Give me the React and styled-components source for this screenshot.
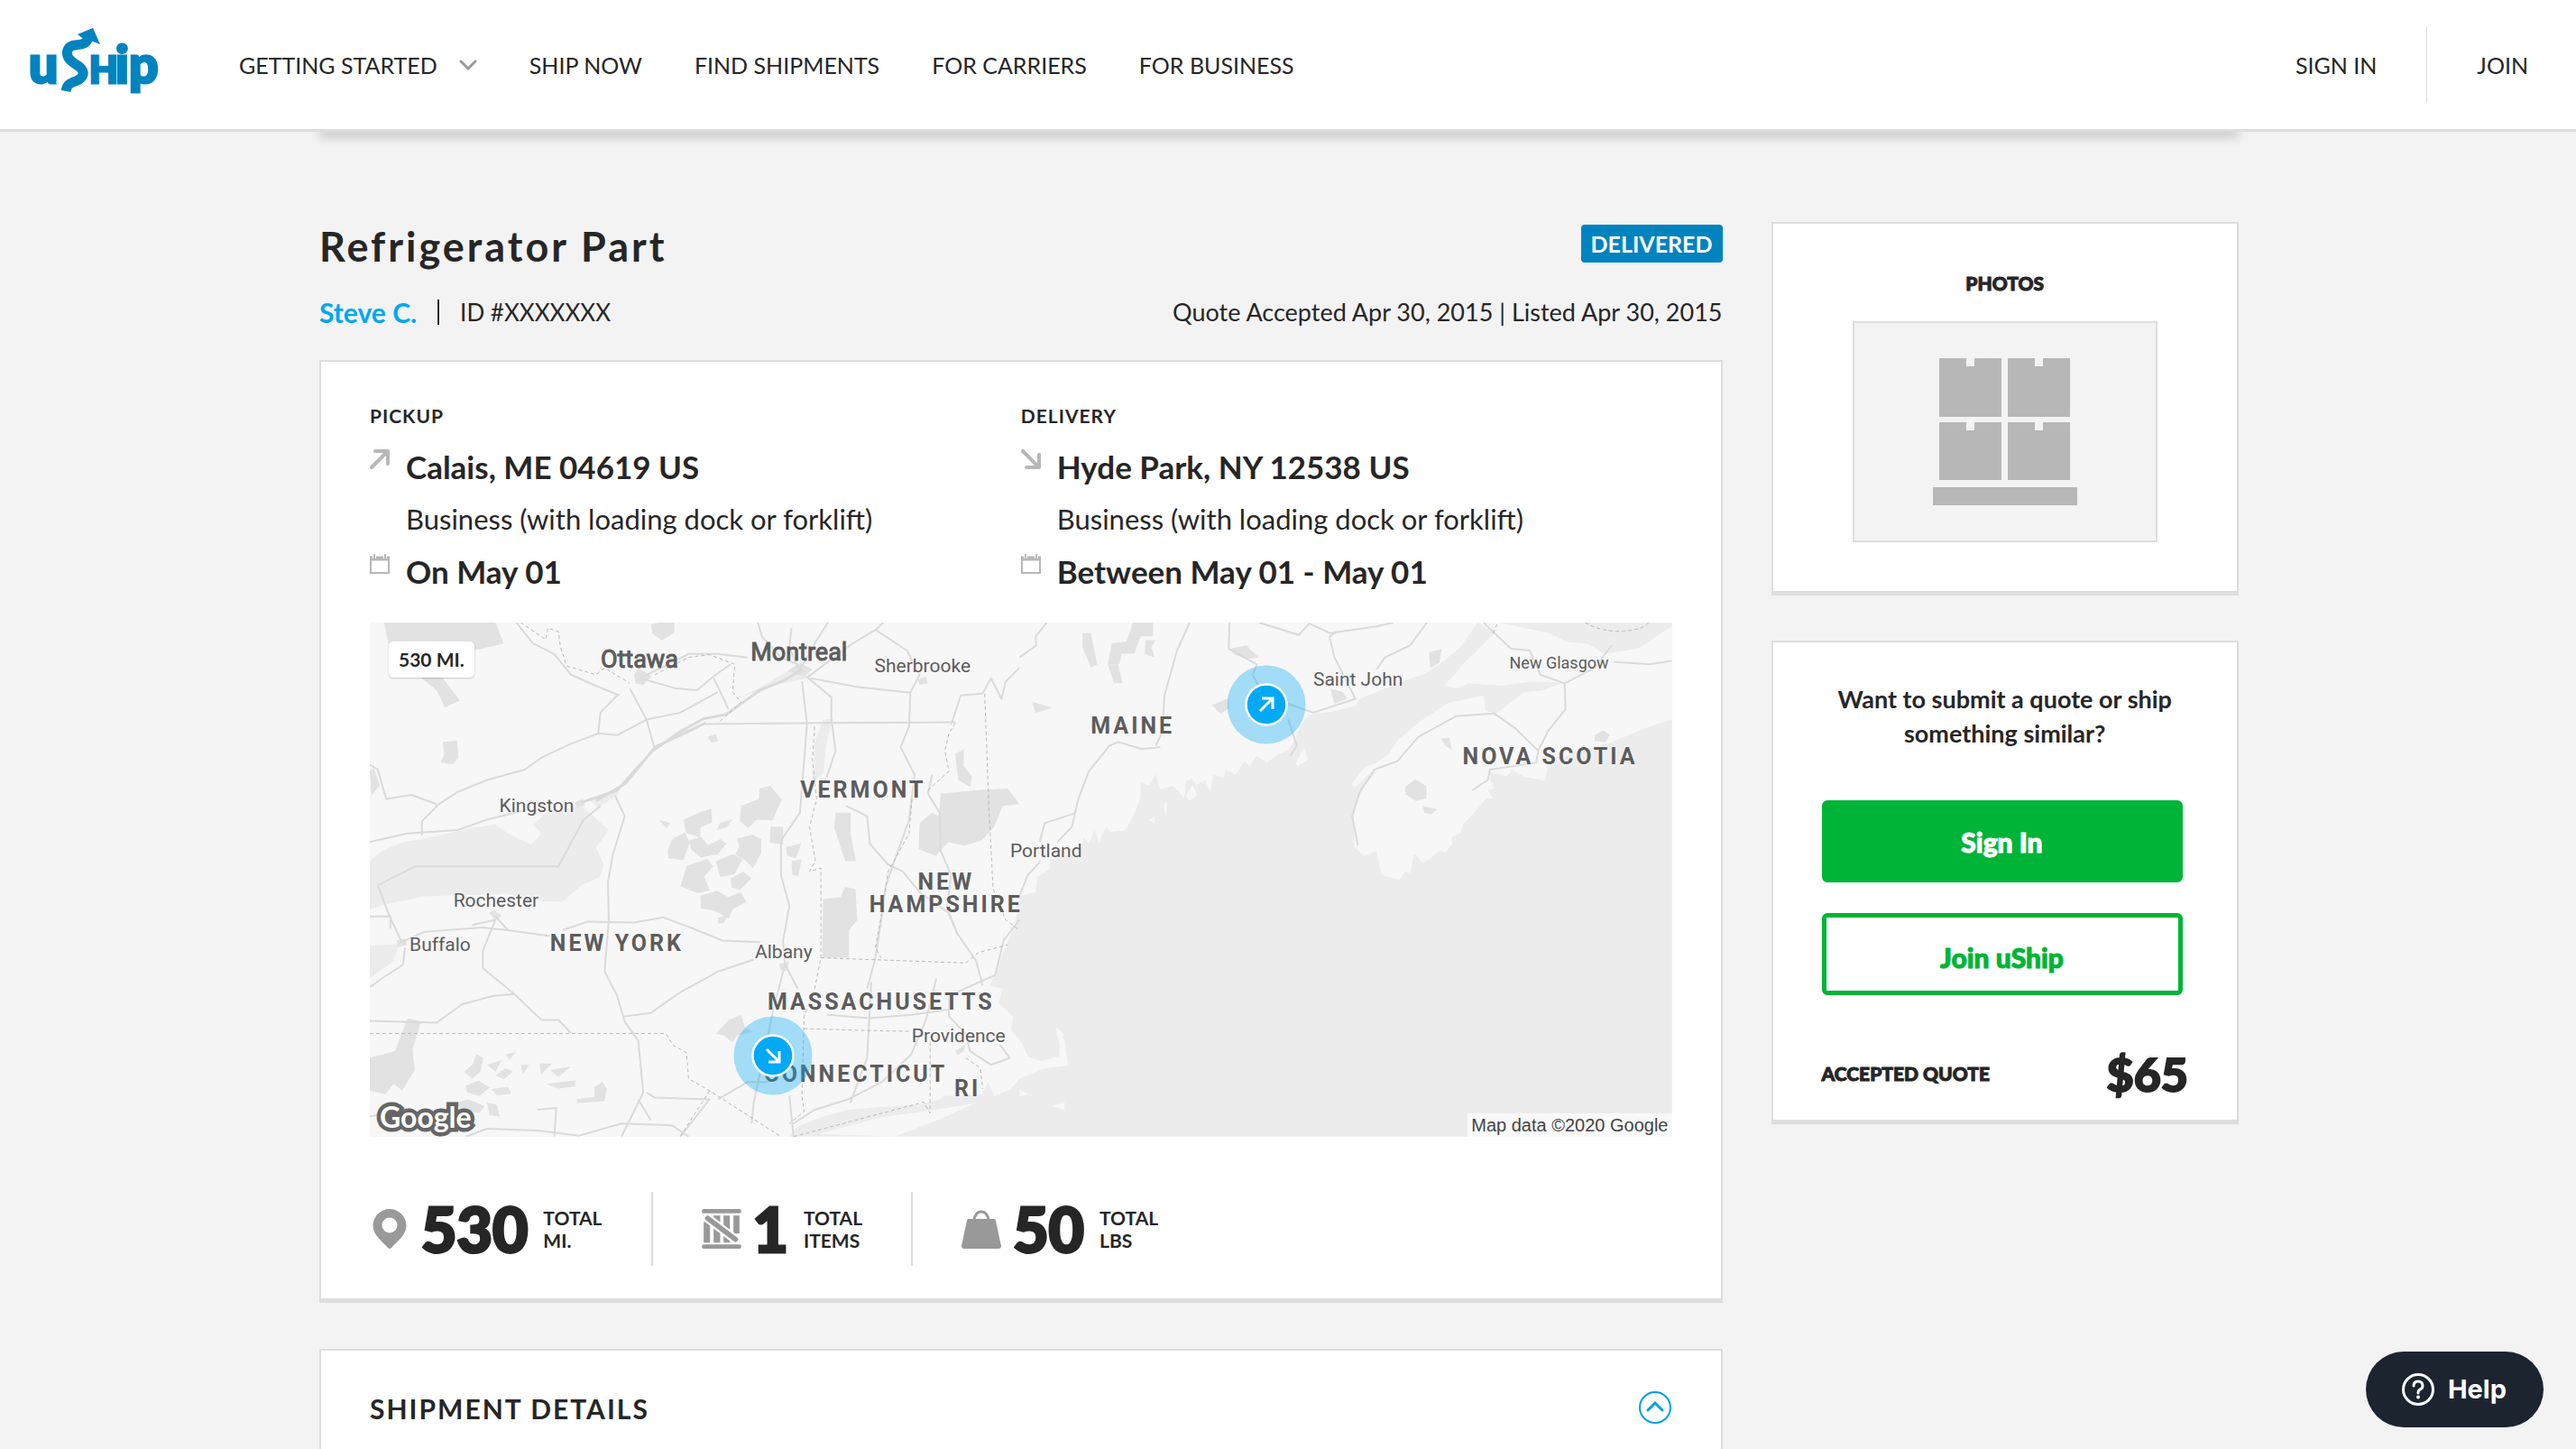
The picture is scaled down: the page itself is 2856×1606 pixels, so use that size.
import React, { useState } from "react";
import styled, { css, createGlobalStyle, ThemeProvider } from "styled-components";

const theme = {
  text: "#262626",
  white: "#fff",
  page: "#f3f3f3",
  line: "#ddd",
  icon: "#b7b7b7",
  brand: "#0083bf",
  link: "#00a7f0",
  green: "#00b437",
  font: '"Lato", "Liberation Sans", sans-serif',
  mapFont: '"Roboto", "Liberation Sans", sans-serif',
};

const GlobalStyle = createGlobalStyle`
  *, *::before, *::after {
    box-sizing: border-box;
  }

  body {
    margin: 0;
    background: ${theme.page};
    color: ${theme.text};
    font-family: ${theme.font};
    font-size: 26px;
  }

  h1, h2, h3, p, ul, dl, dd {
    margin: 0;
    padding: 0;
  }

  a {
    color: inherit;
    text-decoration: none;
  }

  button {
    font-family: inherit;
    cursor: pointer;
  }
`;

const StyledPage = styled.div`
  min-height: 100vh;
  display: flex;
  flex-direction: column;
`;

const StyledHeader = styled.header`
  position: relative;
  z-index: 1;
  height: 146px;
  flex: none;
  display: flex;
  align-items: center;
  padding: 1px 53px 0 34px;
  background: ${({ theme }) => theme.white};
  border-bottom: 3px solid ${({ theme }) => theme.line};
  font-size: 25px;
`;

const StyledLogo = styled.a`
  display: flex;
  margin-right: 89px;
  padding-bottom: 10px;

  svg {
    overflow: visible;
  }
`;

const StyledNav = styled.nav`
  flex: 1;
  display: flex;
  align-items: center;
  gap: 58px;
`;

const StyledNavLink = styled.a`
  display: flex;
  align-items: center;
  gap: 24px;
  line-height: 32px;
`;

const StyledAccount = styled.div`
  display: flex;
  align-items: center;
  height: 84px;

  a + a {
    display: flex;
    align-items: center;
    height: 100%;
    margin-left: 55px;
    padding-left: 55px;
    border-left: 1px solid ${({ theme }) => theme.line};
  }
`;

const StyledContent = styled.div`
  flex: 1;
  display: flex;
  flex-direction: column;
  width: 100%;
  max-width: 2148px;
  margin: 0 auto;
  padding-right: 20px;
`;

const StyledPanelEdge = styled.div`
  height: 10px;
  margin-top: -10px;
  box-shadow: 0 6px 12px rgba(0, 0, 0, 0.2);
`;

const StyledColumns = styled.main`
  flex: 1;
  display: grid;
  grid-template-columns: minmax(0, 3fr) minmax(0, 1fr);
  gap: 54px;
  padding-top: 100px;
`;

const StyledListing = styled.div`
  display: flex;
  flex-direction: column;
`;

const StyledSidebar = styled.aside`
  display: flex;
  flex-direction: column;
  gap: 50px;
`;

const StyledRow = styled.div`
  display: flex;
  justify-content: space-between;
  align-items: center;
`;

const StyledHeading = styled(StyledRow)`
  align-items: flex-start;
`;

const StyledTitle = styled.h1`
  font-size: 45px;
  line-height: 54px;
  letter-spacing: 3px;
`;

const StyledBadge = styled.span`
  margin-top: 3px;
  padding: 5px 11px;
  border-radius: 4px;
  background: ${({ theme }) => theme.brand};
  color: ${({ theme }) => theme.white};
  font-weight: 700;
  font-size: 25px;
  line-height: 32px;
`;

const StyledMeta = styled(StyledRow)`
  margin: 28px 0 35px;
  line-height: 36px;
`;

const StyledOwner = styled.p`
  display: flex;
  align-items: center;
  gap: 23px;

  a {
    color: ${({ theme }) => theme.link};
    font-size: 30px;
    font-weight: 700;
  }

  span {
    padding-left: 23px;
    line-height: 28px;
    border-left: 2px solid ${({ theme }) => theme.text};
  }
`;

const StyledDates = styled.p`
  font-size: 27px;
`;

const StyledCard = styled.section`
  background: ${({ theme }) => theme.white};
  border: 2px solid ${({ theme }) => theme.line};
  border-bottom-width: 5px;
`;

const StyledRoute = styled(StyledCard)`
  padding: 46px 54px 36px;
`;

const StyledStops = styled.div`
  display: grid;
  grid-template-columns: 1fr 1fr;
  margin-bottom: 38px;
`;

const StyledLabel = styled.h3`
  font-size: 21px;
  line-height: 28px;
  letter-spacing: 1px;
  margin-bottom: 23px;
`;

const StyledStop = styled.div`
  display: grid;
  grid-template-columns: 22px 1fr;
  column-gap: 18px;
  row-gap: 21px;
`;

const StyledStopText = styled.p`
  grid-column: 2;
  font-size: ${({ $strong }) => ($strong ? "35px" : "31px")};
  font-weight: ${({ $strong }) => ($strong ? 700 : 400)};
  line-height: ${({ $strong }) => ($strong ? "38px" : "36px")};
`;

const StyledMap = styled.div`
  position: relative;
  aspect-ratio: 1444 / 570;
  overflow: hidden;
  background: #f7f7f7;
  font-family: ${({ theme }) => theme.mapFont};
  color: #5c5c5c;

  > svg {
    display: block;
    width: 100%;
    height: 100%;
  }
`;

const at = css`
  position: absolute;
  left: ${({ $x }) => ($x / 1444) * 100}%;
  top: ${({ $y }) => ($y / 570) * 100}%;
  transform: translate(-50%, -50%);
`;

const StyledPlace = styled.span`
  ${at}
  white-space: nowrap;
  font-size: 21px;
  line-height: 26px;
  text-shadow: 0 0 3px #f7f7f7, 0 0 3px #f7f7f7;

  ${({ $kind }) =>
    $kind === "town" &&
    css`
      font-size: 18px;
    `}
  ${({ $kind }) =>
    $kind === "capital" &&
    css`
      font-size: 27px;
      -webkit-text-stroke: 1px currentColor;
    `}
  ${({ $kind }) =>
    $kind === "state" &&
    css`
      font-size: 25px;
      font-weight: 700;
      letter-spacing: 3px;
    `}
`;

const StyledMarker = styled.span`
  ${at}
  display: flex;
`;

const StyledDistance = styled.span`
  position: absolute;
  left: 21px;
  top: 21px;
  padding: 6px 11px;
  border-radius: 5px;
  background: ${({ theme }) => theme.white};
  box-shadow: 0 1px 2px rgba(0, 0, 0, 0.2);
  color: ${({ theme }) => theme.text};
  font: 700 21px/28px ${({ theme }) => theme.font};
`;

const StyledGoogle = styled.span`
  position: absolute;
  left: 11px;
  bottom: 4px;
  color: ${({ theme }) => theme.white};
  font: 700 32px/36px ${({ theme }) => theme.font};
  -webkit-text-stroke: 9px #666;
  paint-order: stroke fill;
`;

const StyledCredit = styled.span`
  position: absolute;
  right: 0;
  bottom: 0;
  padding: 0 4px;
  background: rgba(255, 255, 255, 0.7);
  color: #444;
  font: 20px/26px "Liberation Sans", Arial, sans-serif;
`;

const StyledStats = styled.dl`
  display: flex;
  margin-top: 61px;
`;

const StyledStat = styled.div`
  display: flex;
  align-items: center;
  height: 82px;
  padding-right: 54px;

  & + & {
    padding-left: 54px;
    border-left: 2px solid ${({ theme }) => theme.line};
  }
`;

/* the stroke brings bold up to the weight of the black cut */
const StyledStatValue = styled.dd`
  order: 1;
  margin: 0 17px 0 13px;
  font-size: 68px;
  font-weight: 900;
  line-height: 80px;
  -webkit-text-stroke: 3px currentColor;
`;

const StyledStatLabel = styled.dt`
  order: 2;
  font-size: 21px;
  font-weight: 700;
  line-height: 25px;

  span {
    display: block;
  }
`;

const StyledDetails = styled(StyledCard)`
  flex: 1;
  margin-top: 51px;
  padding: 43px 54px 0;
  border-bottom: 0;

  h2 {
    font-size: 30px;
    line-height: 42px;
    letter-spacing: 2px;
  }
`;

const StyledToggle = styled.button`
  display: flex;
  padding: 0;
  border: 0;
  background: none;
`;

const StyledPhotos = styled(StyledCard)`
  display: flex;
  flex-direction: column;
  align-items: center;
  gap: 28px;
  padding: 52px 54px 54px;
`;

const StyledCaption = styled.h3`
  font-size: 21px;
  font-weight: 900;
  line-height: 28px;
  -webkit-text-stroke: 1px currentColor;
`;

const StyledPhoto = styled.div`
  display: flex;
  justify-content: center;
  align-items: center;
  width: 338px;
  max-width: 100%;
  height: 245px;
  background: ${({ theme }) => theme.page};
  border: 2px solid ${({ theme }) => theme.line};
`;

const StyledQuote = styled(StyledCard)`
  padding: 44px 54px 19px;
`;

const StyledPrompt = styled.p`
  margin-bottom: 55px;
  font-size: 27px;
  font-weight: 700;
  line-height: 38px;
  text-align: center;
`;

const StyledButton = styled.button`
  display: block;
  width: 100%;
  max-width: 400px;
  height: 91px;
  margin-bottom: 34px;
  padding: ${({ $outline }) => ($outline ? "7px 0 0" : "0")};
  border: 5px solid ${({ theme }) => theme.green};
  border-radius: 6px;
  background: ${({ theme, $outline }) => ($outline ? theme.white : theme.green)};
  color: ${({ theme, $outline }) => ($outline ? theme.green : theme.white)};
  font-size: 30px;
  font-weight: 900;
  -webkit-text-stroke: 1px currentColor;
`;

const StyledPrice = styled.strong`
  font-size: 52px;
  font-weight: 900;
  line-height: 64px;
  -webkit-text-stroke: 2px currentColor;
`;

const StyledQuoteRow = styled(StyledRow)`
  margin-top: 55px;
`;

const StyledHelp = styled.button`
  position: fixed;
  right: 36px;
  bottom: 24px;
  display: flex;
  align-items: center;
  gap: 14px;
  height: 84px;
  padding: 0 41px 0 39px;
  border: 0;
  border-radius: 42px;
  background: #1c2430;
  color: ${({ theme }) => theme.white};
  font: 700 29px/34px "Inter", sans-serif;
`;

const Logo = () => (
  <svg width="142" height="72" viewBox="0 0 142 72" fill="#0083bf" role="img" aria-label="uShip">
    <g
      fontFamily="Lato"
      fontWeight="900"
      stroke="#0083bf"
      strokeWidth="3"
    >
      <text x="-2" y="61" fontSize="57">u</text>
      <text x="65" y="61" fontSize="41">H</text>
      <text x="94" y="61" fontSize="57">i</text>
      <text x="109" y="61" fontSize="57">p</text>
    </g>
    <path
      d="M39 70c1-6 3-8 8-10 10-3 14-9 9-15-3-4-13-7-15-14-2-6 1-11 8-12 6-1 12 0 15-8"
      fill="none"
      stroke="#fff"
      strokeWidth="14"
    />
    <path
      d="M39 70c1-6 3-8 8-10 10-3 14-9 9-15-3-4-13-7-15-14-2-6 1-11 8-12 6-1 12 0 15-8"
      fill="none"
      stroke="#0083bf"
      strokeWidth="11"
    />
    <path d="M69 0l8 18-8-3-12-4-5-4z" />
  </svg>
);

const ChevronDown = () => (
  <svg width="20" height="12" viewBox="0 0 20 12" fill="none" stroke="#999" strokeWidth="3" strokeLinecap="round">
    <path d="M2 2l8 8 8-8" />
  </svg>
);

const ArrowIcon = ({ down }) => (
  <svg
    width="22"
    height="22"
    viewBox="0 0 22 22"
    fill="none"
    stroke="#b7b7b7"
    strokeWidth="4"
    strokeLinecap="round"
    strokeLinejoin="round"
  >
    {down ? <path d="M2 2l17 17M6 20h14V6" /> : <path d="M2 20L19 3M6 2h14v14" />}
  </svg>
);

const CalendarIcon = () => (
  <svg width="22" height="22" viewBox="0 0 22 22" fill="none" stroke="#b7b7b7">
    <path d="M1 4v17h20V4" strokeWidth="2" />
    <path d="M0 5h22" strokeWidth="5" />
    <path d="M5 0v5M17 0v5" stroke="#fff" strokeWidth="4" />
    <path d="M5 0v5M17 0v5" strokeWidth="2" />
  </svg>
);

const PinIcon = () => (
  <svg width="44" height="44" viewBox="0 0 44 44" fill="#999">
    <path
      fillRule="evenodd"
      d="M22 0a18.500 18.500 0 0 0-18.500 18.500C3.500 29 14 36 20 43q2 2 4 0c6-7 16.500-14 16.500-24.500A18.500 18.500 0 0 0 22 0zm0 9.500a8.500 8.500 0 1 1 0 17 8.500 8.500 0 0 1 0-17z"
    />
  </svg>
);

const CrateIcon = () => (
  <svg width="44" height="44" viewBox="51 62 131 132" fill="#999">
    <path d="M57 105h21v69H57zM90 84h22v90H90zM123 84h21v90h-21zM156 84h20v60h-20z" />
    <path d="M70 93l93 70" stroke="#fff" strokeWidth="30" strokeLinecap="round" />
    <path d="M70 93l93 70" stroke="#999" strokeWidth="17" strokeLinecap="round" />
    <rect x="51" y="62" width="131" height="14" rx="6" />
    <rect x="51" y="180" width="131" height="14" rx="6" />
  </svg>
);

const BagIcon = () => (
  <svg width="44" height="44" viewBox="0 0 44 44" fill="#999">
    <path d="M14 13a8 10 0 0 1 16 0" fill="none" stroke="#999" strokeWidth="3" />
    <path d="M8 11h28q2 0 2 2l6 28q0 3-3 3H3q-3 0-3-3l6-28q0-2 2-2z" />
  </svg>
);

const PalletIcon = () => (
  <svg width="160" height="163" viewBox="0 0 160 163" fill="#b7b7b7">
    <path d="M7 0h30v9h9V0h30v65H7zM83 0h30v9h9V0h30v65H83z" />
    <path d="M7 71h30v9h9v-9h30v64H7zM83 71h30v9h9v-9h30v64H83zM0 143h160v20H0z" />
  </svg>
);

const MarkerIcon = ({ down }) => (
  <svg width="88" height="88" viewBox="0 0 88 88">
    <circle cx="44" cy="44" r="43.500" fill="#03a9f4" opacity="0.350" />
    <circle cx="44" cy="44" r="22.500" fill="#03a9f4" stroke="#fff" strokeWidth="2.500" />
    <path
      d={down ? "M37 37l13 13M51 39v12H39" : "M37 51l13-13M39 37h12v12"}
      fill="none"
      stroke="#fff"
      strokeWidth="3"
    />
  </svg>
);

const StyledTerrain = styled.svg`
  path {
    vector-effect: non-scaling-stroke;
  }
`;

const Terrain = () => (
  <StyledTerrain viewBox="21 29 3100 1489" preserveAspectRatio="none" aria-hidden="true">
    {/* lakes and ocean */}
    <g fill="#ececec">
      <path d="M21 720L50 690 100 665 150 655 270 622 320 615 350 640 405 672 430 640 410 615 440 580 525 560 590 630 560 680 578 730 570 765 525 790 480 838 420 835 350 815 150 822 60 845 21 860z" />
      <path d="M21 965l70-5-15 50-55 50z" />
      <path d="M1100 310l25-3-15 60-10 100-25 30 5-120zM545 545l60-35 10 15-50 40z" />
      <path d="M945 220l100-70 20 40-80 20-90 40z" />
      <path
        transform="translate(1568 0)"
        d="M0 820L38 810 43 765 71 745 73 715 145 695 153 650 165 670 179 630 189 665 207 620 217 635 250 632 262 610 278 570 288 535 288 492 310 502 323 468 336 512 366 502 392 538 396 490 410 480 420 500 442 485 455 522 460 470 485 480 492 455 515 470 535 430 548 445 565 415 590 435 615 410 640 400 655 370 668 330 690 295 740 288 800 270 810 250 870 220 910 200 960 180 1000 150 1050 100 1090 29 1130 60 1090 110 1055 150 1040 175 1010 210 1040 220 1070 205 1150 212 1215 200 1297 203 1245 225 1200 232 1165 265 1135 292 1110 285 1105 240 1020 262 960 310 900 370 880 410 850 435 820 450 790 500 800 505 835 465 850 460 830 490 805 530 795 600 798 680 820 705 850 690 862 760 880 765 905 775 918 750 930 755 940 700 960 725 975 715 1000 690 1015 695 1030 670 1028 650 1050 640 1055 615 1075 590 1090 570 1110 540 1128 538 1115 515 1132 510 1120 485 1120 460 1160 475 1172 455 1200 475 1252 487 1258 440 1330 400 1400 380 1470 345 1520 322 1553 312V1518H-548L-530 1490-480 1465-410 1440-330 1432-240 1425-190 1410-180 1400-90 1395-75 1360-60 1400-20 1380 0 1350 60 1320 115 1312 108 1240 85 1200 95 1250 95 1285 50 1300 20 1285 5 1245-20 1210-15 1170-50 1130-40 1090-70 1080-50 1020-30 960-10 900z"
      />
      <path d="M2710 29L2830 60 2870 85 2920 90 2960 120 3040 105 3121 40V29z" />
    </g>
    {/* islands */}
    <g fill="#f7f7f7">
      <path d="M1090 1510l150-48 120-20 100-20-80 45-110 51zM2225 440l20-50 10 35-24 20zM1965 530l15-30 12 30-20 15zM1910 560l8-15 0 50zM1875 600l14-8 0 20z" />
      <path d="M1645 1430l30-15v25zM1568 1380l20 15-20 5zM1655 1200l18 20-4 20z" />
    </g>
    {/* parks */}
    <g fill="#e2e2e2">
      <path d="M55 29H320L340 90 240 118 150 95 65 90zM140 185l40-20 55 90-35 20-20-50zM690 35l20-6h36v30l-30 22-22-20zM195 375l34-4 3 50-14 18-28-4 8-25z" />
      <path d="M730 690l12-35 30-18 10 30-14 50-36-5zM768 600l40-22 26-10 2 40-28 14 0 30-34-14zM780 660l30-10 16 24 30-18 14 14-20 30-40 10-24-24zM775 735l50-22 14 22-22 30 14 40-30 8-40-20zM845 720l40-20 24 14-20 44-34 8zM895 655l38-12 20 14 0 40-20 44-20-26-22-14 10-24zM880 770l30-20 20 20-28 34-20-8zM808 820l40-14 26 18 30-14 14 28-32 20-10 28-34-22-32-8zM850 885l24-10-10 24-14 2zM855 610l30-12-14 24-24 8zM708 600l28 10-8 14z" />
      <path d="M905 560l42-20 2-30 25-8 28 40-22 60-38-2-20 24-20-20zM975 620l30 0 0 52-32-5zM1012 680l36-12-5 20-8 24-20-8zM1025 720l24-6-8 50-14-6zM1130 580h36l0 60 12 80h-25l-26-95z" />
      <path d="M1100 830l42-5 10-30 25 5 5 90-20 30v80h-64zM1330 610l30-30 16 10 4-65 80-10 80-5 28 45-40 5-20 60-30 40-40 15-40-10-30 40-40-20zM1415 410l20-15v50l20 30-5 30-28-20z" />
      <path d="M21 1290l60-20 30-95 32 10-20 80 5 60-30 60-20-20-20 30-37-10zM245 1330l20-20 10-30 16 10-6 40-20 20zM300 1310l36-14-16 34zM320 1340l24-20 18 10-22 22zM250 1370l30-14 26 20-24 24-30-10zM310 1380l40-6 8 20-34 4zM225 1420l30-10 40 20-14 20-40-8zM300 1420l24 6 6 34-24-4zM345 1280l24-8-16 24zM380 1310l20 0-14 26zM425 1306l30 0-26 32zM450 1325l50-10-30 30zM440 1365l70-10 0 18-40 6zM555 1375l20-16 10 20-5 36-66 6 0-12 42-6z" />
      <path d="M845 1220l30-40 30-15 10 40 20 10-40 10-10 20-20-20zM30 450l15 50-20 30-4-70zM825 360l20-8 5 20-15 5z" />
      <g transform="translate(1568 0)">
        <path d="M270 29h48v40l-30 0-15 50-30 0-5 30-28 0 10-60 35-5zM210 150l25 0 10 55-20 0zM150 60l20 0 15 90-15 10-20-60zM300 80l24 0-10 20 8 30-24-10zM500 105l40-10 30 35-30 5-30-15zM30 258l48 18-40 15zM975 115l30-10-5 40-22 15zM458 268l40-20 0 30-20 14z" />
        <path d="M918 505l25-22 26 20 0 35-25 8-25-20zM960 560l34 10-14 14-16-4zM1003 365l20-3 6 35-14-10zM1370 355l20-13 15 12-10 22-26-4zM740 220l30 10 10 20-30 15z" />
      </g>
      <path d="M650 180l12-20 30 25-20 25-18-5zM1015 170l30-25 30 20-20 20zM1325 195l20-10 5 20-20 5zM305 870l12-8 18 15-15 15zM85 950l20-5 5 18-22 6zM995 1018l25-8-5 25-12 8zM1415 1270l25-20-5 20-15 12zM510 550l18-10 5 20-20 5z" />
    </g>
    {/* roads */}
    <g fill="none" stroke="#dadada" strokeWidth="2" strokeLinejoin="round">
      <path strokeWidth="3" d="M525 550L610 515 650 460 695 400 760 345 815 308 870 295 950 225 1010 195 1050 165M560 545L630 495 700 390 820 320" />
      <path d="M370 29L410 90 460 120 500 180 555 210 615 240M665 190L750 220 800 225 845 180 880 150M665 190L780 120 850 120 920 130M1040 160L1020 100 1025 45M1045 165L1085 80 1112 29M945 29L955 70 1000 130 1040 150M1060 190L1170 90 1225 50 1244 29M1225 50L1300 110 1330 180 1308 232 1180 215 1070 190M1308 232L1305 330 1285 390 1318 470 1305 600 1270 720 1250 790 1240 880 1225 1000 1205 1090" />
      <path d="M640 220L680 310 700 400M610 240L570 290 565 350 500 380 430 420 390 455 300 485 230 520 185 555 145 605 145 645M565 350L610 355 680 310 760 290 850 230M840 190L875 280M1050 200L1062 320 1055 430 1045 580 1000 660 1000 760 1020 850 1005 950 1010 1020 1040 1090M1065 190L1120 245 1120 310 1130 400 1108 480M1155 560L1205 590 1212 670 1255 730 1290 750 1330 810 1400 870 1420 930 1465 1010 1480 1080M21 665L110 640 230 630 300 600 400 570" />
      <path d="M21 440L40 455 60 540 120 528 180 555M605 530L628 590 600 700 588 780 590 890 580 1040 610 1110 628 1185 660 1240 672 1390 640 1470 620 1518M625 1170L690 1160 760 1100 850 1040 935 1005M40 790L130 735H470L530 600 570 560M40 790L68 880 95 950M21 880H70V915M95 955L150 925 290 912 350 920 450 937M480 920L540 895 650 898 720 883 790 915 860 950 950 955M320 880L350 920M320 890L290 980 290 1030 365 1105 430 1180 470 1180 500 1218M365 1105L315 1110 240 1135 180 1188 21 1183M105 970L100 1020 50 1060 21 1085M320 890L265 905" />
      <path d="M1350 525L1378 580 1380 690 1405 760 1395 860 1420 930M1360 470L1350 525M1568 890L1530 950 1510 1050 1400 1110 1400 1170 1440 1220 1450 1270 1500 1310 1545 1290 1520 1250M1030 1480L1080 1440 1160 1410 1240 1360 1310 1280 1345 1180 1370 1060M1110 1165L1210 1175 1310 1165 1400 1150M1215 1070L1205 1290 1165 1420M680 1390L700 1405 830 1410 760 1518M930 1480L935 1420 980 1160 1005 1040M850 1410L920 1360 970 1360M21 1460L80 1445M250 1518L300 1495 420 1500 520 1515 620 1480 740 1485 780 1518M420 1440L465 1435 460 1518M1405 325L1428 240 1480 235 1500 190 1525 250 1535 200 1568 160M820 323L1100 320 1415 318M1020 1400L1030 1518M660 1410L690 1470" />
      <g transform="translate(1568 0)">
        <path d="M0 820L20 760 50 720M90 665L125 620 140 540 165 460 215 385 235 375 290 395 335 390M325 385L340 345 345 240 375 110 405 29M48 665L60 610 135 580M0 130L40 95 38 70 65 29M500 29L498 105 565 150 555 180 570 215M640 265L700 290 800 250 750 130 738 70 755 55M570 29L665 65 690 32 740 60 850 40 890 29M640 310L660 385 645 415M850 165L870 130 930 95 970 29M1105 29L1170 105 1215 110 1240 180 1298 205 1370 160 1410 95M1415 143L1500 150 1553 140M1298 205L1300 280 1260 340 1235 400 1180 335 1130 292 1040 300 950 360 900 430 845 455 810 520 792 590 806 675M1235 400L1230 435 1120 455 1115 485 1078 515" />
      </g>
    </g>
    {/* state and country borders */}
    <g fill="none" stroke="#b9b9b9" strokeWidth="1" strokeDasharray="4 3">
      <path d="M380 29L440 78 445 45 470 55 475 100 490 155 560 180 580 160 640 205M700 180L780 130 830 122 890 150 885 230 905 260 850 320M1080 330L1075 430 1085 540 1068 620 1082 720 1068 750 1095 740V1000L1080 1090 1055 1170 1050 1400 1055 1445 1020 1480M1095 1000L1440 1015 1470 985 1540 962M1055 1205L1185 1210 1310 1213M21 1219H725L745 1255 775 1275 780 1350 830 1385 1000 1518M1030 1518L1340 1418 1355 1450V1240M1485 235L1495 565 1505 800 1535 890 1568 920M1415 320L1400 350 1390 400 1400 460 1345 520M1312 540L1305 640 1255 750 1240 870 1225 970 1238 1000M1440 1290L1475 1320 1480 1380M830 1385L760 1518" />
      <path d="M2915 29q40 28 90 25 50-5 60-25M2695 60l12-31" />
    </g>
  </StyledTerrain>
);

const stops = [
  {
    label: "Pickup",
    place: "Calais, ME 04619 US",
    site: "Business (with loading dock or forklift)",
    date: "On May 01",
    marker: [994, 91],
  },
  {
    label: "Delivery",
    place: "Hyde Park, NY 12538 US",
    site: "Business (with loading dock or forklift)",
    date: "Between May 01 - May 01",
    marker: [447, 480],
    down: true,
  },
];

const places = [
  ["Ottawa", 299, 41, "capital"],
  ["Montreal", 476, 33, "capital"],
  ["Sherbrooke", 613, 48],
  ["Kingston", 185, 203],
  ["Rochester", 140, 308],
  ["Buffalo", 78, 357],
  ["Albany", 459, 365],
  ["Portland", 750, 253],
  ["Providence", 653, 458],
  ["Saint John", 1096, 63],
  ["New Glasgow", 1319, 45, "town"],
  ["VERMONT", 547, 186, "state"],
  ["NEW YORK", 274, 356, "state"],
  ["NEW", 639, 288, "state"],
  ["HAMPSHIRE", 639, 313, "state"],
  ["MASSACHUSETTS", 567, 421, "state"],
  ["CONNECTICUT", 539, 501, "state"],
  ["RI", 663, 517, "state"],
  ["MAINE", 846, 115, "state"],
  ["NOVA SCOTIA", 1309, 149, "state"],
];

const stats = [
  { value: "530", unit: "MI.", Icon: PinIcon },
  { value: "1", unit: "ITEMS", Icon: CrateIcon },
  { value: "50", unit: "LBS", Icon: BagIcon },
];

const Header = () => (
  <StyledHeader>
    <StyledLogo href="#home">
      <Logo />
    </StyledLogo>
    <StyledNav>
      <StyledNavLink href="#start">
        GETTING STARTED <ChevronDown />
      </StyledNavLink>
      <StyledNavLink href="#ship">SHIP NOW</StyledNavLink>
      <StyledNavLink href="#find">FIND SHIPMENTS</StyledNavLink>
      <StyledNavLink href="#carriers">FOR CARRIERS</StyledNavLink>
      <StyledNavLink href="#business">FOR BUSINESS</StyledNavLink>
    </StyledNav>
    <StyledAccount>
      <a href="#signin">SIGN IN</a>
      <a href="#join">JOIN</a>
    </StyledAccount>
  </StyledHeader>
);

const RouteMap = () => (
  <StyledMap>
    <Terrain />
    {places.map(([name, x, y, kind]) => (
      <StyledPlace key={name} $x={x} $y={y} $kind={kind}>
        {name}
      </StyledPlace>
    ))}
    {stops.map(({ label, marker, down }) => (
      <StyledMarker key={label} $x={marker[0]} $y={marker[1]}>
        <MarkerIcon down={down} />
      </StyledMarker>
    ))}
    <StyledDistance>530 MI.</StyledDistance>
    <StyledGoogle>Google</StyledGoogle>
    <StyledCredit>Map data ©2020 Google</StyledCredit>
  </StyledMap>
);

const App = () => {
  const [open, setOpen] = useState(true);

  return (
    <ThemeProvider theme={theme}>
      <GlobalStyle />
      <StyledPage>
        <Header />
        <StyledContent>
          <StyledPanelEdge />
          <StyledColumns>
            <StyledListing>
              <StyledHeading>
                <StyledTitle>Refrigerator Part</StyledTitle>
                <StyledBadge>DELIVERED</StyledBadge>
              </StyledHeading>
              <StyledMeta>
                <StyledOwner>
                  <a href="#steve">Steve C.</a>
                  <span>ID #XXXXXXX</span>
                </StyledOwner>
                <StyledDates>
                  Quote Accepted Apr 30, 2015 | Listed Apr 30, 2015
                </StyledDates>
              </StyledMeta>

              <StyledRoute>
                <StyledStops>
                  {stops.map(({ label, place, site, date, down }) => (
                    <div key={label}>
                      <StyledLabel>{label.toUpperCase()}</StyledLabel>
                      <StyledStop>
                        <ArrowIcon down={down} />
                        <StyledStopText $strong>{place}</StyledStopText>
                        <StyledStopText>{site}</StyledStopText>
                        <CalendarIcon />
                        <StyledStopText $strong>{date}</StyledStopText>
                      </StyledStop>
                    </div>
                  ))}
                </StyledStops>
                <RouteMap />
                <StyledStats>
                  {stats.map(({ value, unit, Icon }) => (
                    <StyledStat key={unit}>
                      <Icon />
                      <StyledStatLabel>
                        <span>TOTAL</span>
                        <span>{unit}</span>
                      </StyledStatLabel>
                      <StyledStatValue>{value}</StyledStatValue>
                    </StyledStat>
                  ))}
                </StyledStats>
              </StyledRoute>

              <StyledDetails>
                <StyledRow>
                  <h2>SHIPMENT DETAILS</h2>
                  <StyledToggle
                    type="button"
                    aria-label="Shipment details"
                    aria-expanded={open}
                    onClick={() => setOpen(!open)}
                  >
                    <svg width="38" height="38" viewBox="0 0 38 38" fill="none" stroke="#009fe3">
                      <circle cx="19" cy="18" r="17" strokeWidth="2" />
                      <path d={open ? "M11 21l8-8 8 8" : "M11 15l8 8 8-8"} strokeWidth="3" strokeLinecap="round" />
                    </svg>
                  </StyledToggle>
                </StyledRow>
              </StyledDetails>
            </StyledListing>

            <StyledSidebar>
              <StyledPhotos>
                <StyledCaption>PHOTOS</StyledCaption>
                <StyledPhoto>
                  <PalletIcon />
                </StyledPhoto>
              </StyledPhotos>
              <StyledQuote>
                <StyledPrompt>
                  Want to submit a quote or ship something similar?
                </StyledPrompt>
                <StyledButton type="button">Sign In</StyledButton>
                <StyledButton type="button" $outline>
                  Join uShip
                </StyledButton>
                <StyledQuoteRow>
                  <StyledCaption>ACCEPTED QUOTE</StyledCaption>
                  <StyledPrice>$65</StyledPrice>
                </StyledQuoteRow>
              </StyledQuote>
            </StyledSidebar>
          </StyledColumns>
        </StyledContent>
      </StyledPage>
      <StyledHelp type="button">
        <svg width="38" height="38" viewBox="0 0 38 38" fill="none" stroke="#fff">
          <circle cx="19" cy="19" r="16.500" strokeWidth="3" />
          <path d="M14 15q0-5 5-5t5 5q0 3-3 4-2 1-2 4" strokeWidth="3" strokeLinecap="round" />
          <circle cx="19" cy="27.500" r="2" fill="#fff" stroke="none" />
        </svg>
        Help
      </StyledHelp>
    </ThemeProvider>
  );
};

export default App;
